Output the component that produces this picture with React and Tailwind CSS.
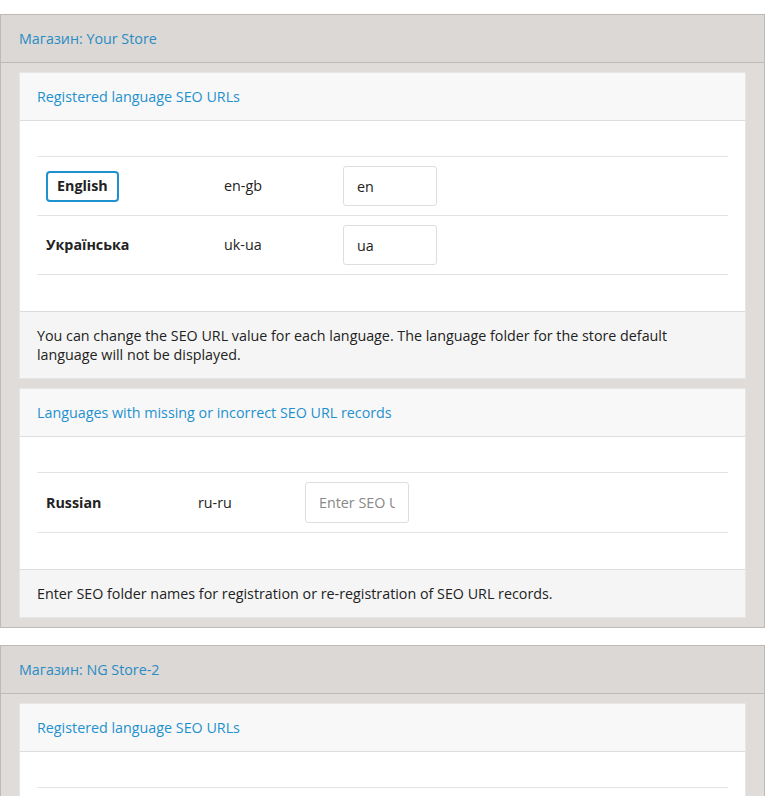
const stores = [
  {
    name: 'Your Store',
    registered: [
      { name: 'English', code: 'en-gb', value: 'en', active: true },
      { name: 'Українська', code: 'uk-ua', value: 'ua' },
    ],
    missing: [{ name: 'Russian', code: 'ru-ru' }],
  },
  {
    name: 'NG Store-2',
    registered: [
      { name: 'English', code: 'en-gb', value: 'en', active: true },
      { name: 'Українська', code: 'uk-ua', value: 'ua' },
    ],
    missing: [],
  },
]

function Card({ title, footer, children }) {
  return (
    <div className="bg-white border border-[#e6e6e6]">
      <div className="h-[48px] flex items-center px-[17px] bg-[#f8f8f8] border-b border-[#dddddd] text-[#1e91cf]">
        {title}
      </div>
      <div className="px-[17px] pt-[35px] pb-[36px]">{children}</div>
      {footer ? (
        <div className="bg-[#f5f5f5] border-t border-[#dcdcdc] px-[17px] py-[14px] leading-[19px] text-[#222]">
          {footer}
        </div>
      ) : null}
    </div>
  )
}

function RegisteredTable({ rows }) {
  return (
    <div className="border-t border-[#e2e2e2]">
      {rows.map((r) => (
        <div key={r.code} className="flex items-center h-[59px] border-b border-[#e2e2e2] text-[#222]">
          <div className="w-[178px] pl-[9px]">
            {r.active ? (
              <span className="inline-flex items-center h-[31px] px-[9px] border-2 border-[#1e91cf] rounded-[4px] font-bold">
                {r.name}
              </span>
            ) : (
              <span className="font-bold">{r.name}</span>
            )}
          </div>
          <div className="w-[128px] pl-[9px]">{r.code}</div>
          <input
            readOnly
            value={r.value}
            className="w-[94px] h-[40px] px-[13px] border border-[#dedede] rounded-[3px] text-[#222] outline-none"
          />
        </div>
      ))}
    </div>
  )
}

function MissingTable({ rows }) {
  return (
    <div className="border-t border-[#e2e2e2]">
      {rows.map((r) => (
        <div key={r.code} className="flex items-center h-[60px] border-b border-[#e2e2e2] text-[#222]">
          <div className="w-[152px] pl-[9px] font-bold">{r.name}</div>
          <div className="w-[116px] pl-[9px]">{r.code}</div>
          <input
            placeholder="Enter SEO URL"
            className="w-[104px] h-[41px] px-[13px] border border-[#dedede] rounded-[3px] text-[#222] placeholder:text-[#888] outline-none"
          />
        </div>
      ))}
    </div>
  )
}

export default function App() {
  return (
    <div className="min-h-screen bg-white pt-[14px] pr-[10px] text-[14.3px] font-['Open_Sans',sans-serif]">
      <div className="flex flex-col gap-[17px]">
        {stores.map((s) => (
          <div key={s.name} className="border border-[#bdbab7] bg-[#dfdcd9]">
            <div className="h-[48px] flex items-center px-[18px] bg-[#dbd8d5] border-b border-[#bdbab7] text-[#2a8cc4]">
              Магазин: {s.name}
            </div>
            <div className="px-[18px] py-[9px] flex flex-col gap-[9px]">
              <Card
                title="Registered language SEO URLs"
                footer="You can change the SEO URL value for each language. The language folder for the store default language will not be displayed."
              >
                <RegisteredTable rows={s.registered} />
              </Card>
              {s.missing.length > 0 ? (
                <Card
                  title="Languages with missing or incorrect SEO URL records"
                  footer="Enter SEO folder names for registration or re-registration of SEO URL records."
                >
                  <MissingTable rows={s.missing} />
                </Card>
              ) : null}
            </div>
          </div>
        ))}
      </div>
    </div>
  )
}
